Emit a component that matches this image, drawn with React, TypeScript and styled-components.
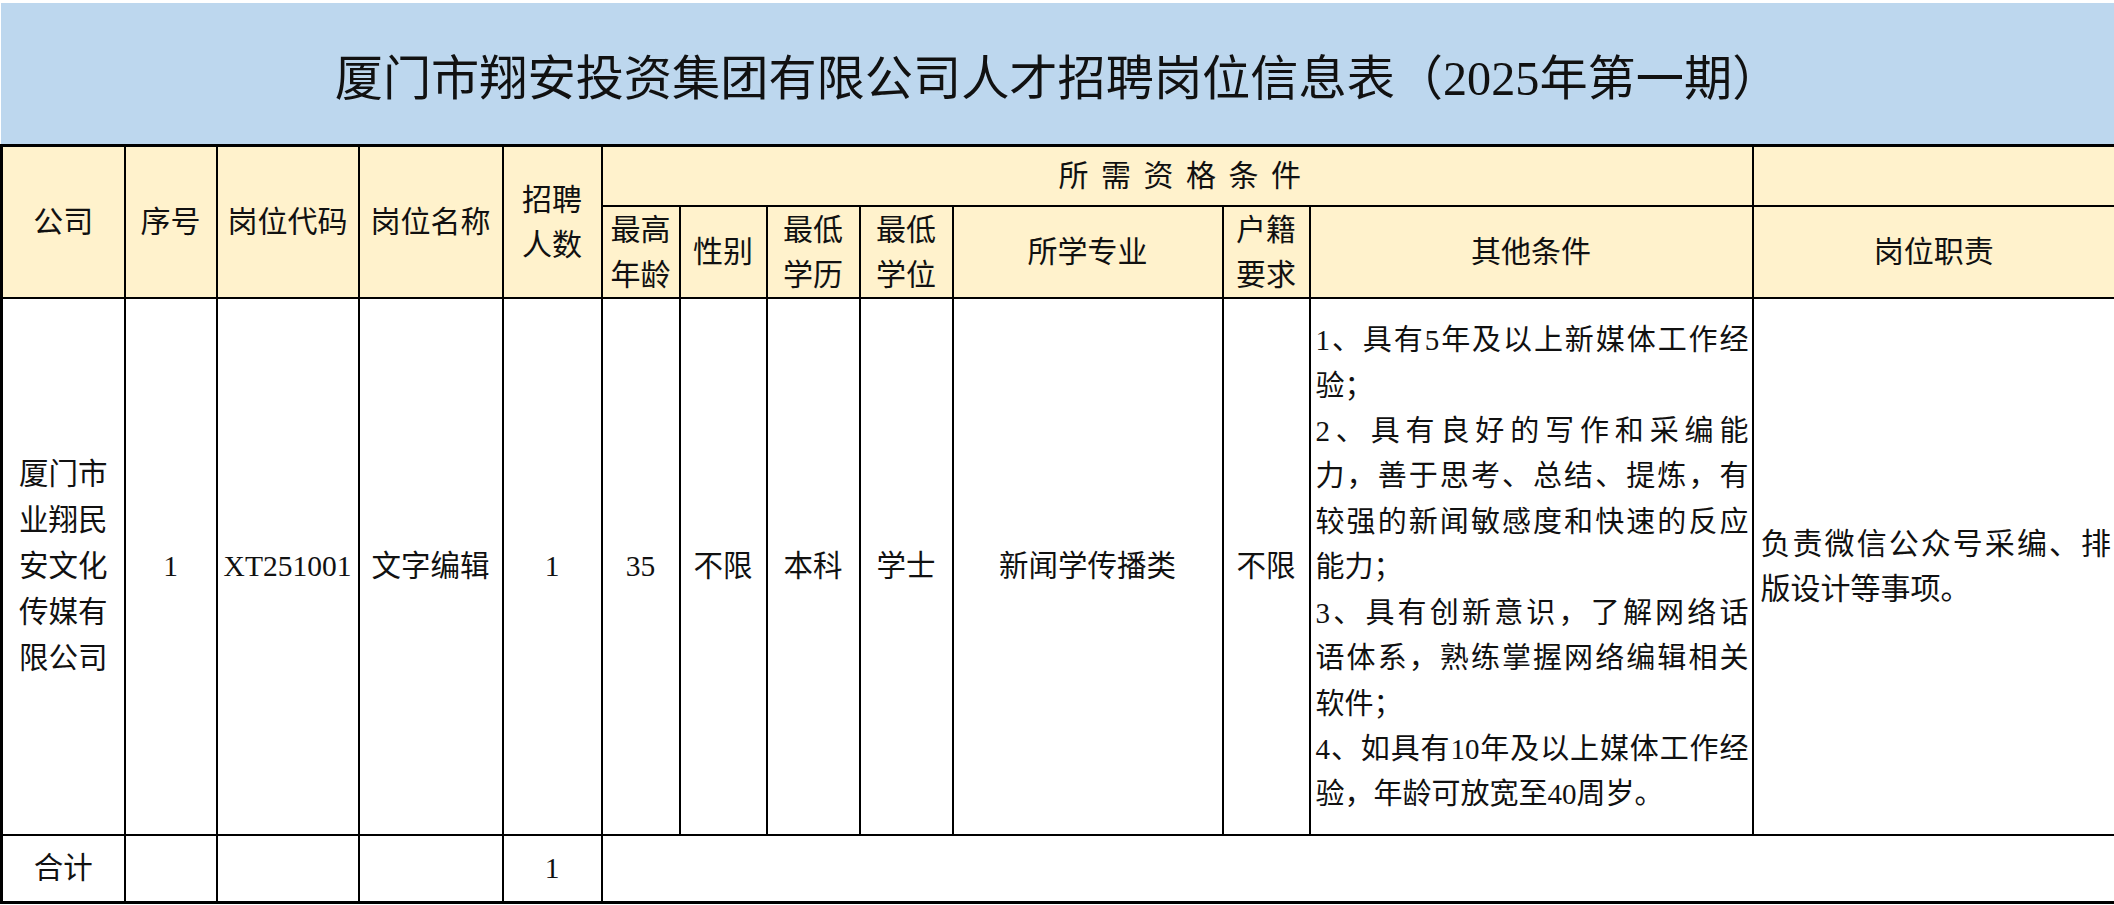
import React from "react";
import styled, { createGlobalStyle } from "styled-components";

const GlobalStyle = createGlobalStyle`
  html, body {
    margin: 0;
    padding: 0;
    background: #ffffff;
  }
  body {
    font-family: "Liberation Serif", "Noto Sans CJK SC", serif;
    color: #111111;
  }
`;

const columns = [123, 92, 142, 144, 99, 78, 87, 93, 93, 270, 87, 443, 363];

const conditions: string[][] = [
  ["1、具有5年及以上新媒体工作经", "验；"],
  ["2、具有良好的写作和采编能", "力，善于思考、总结、提炼，有", "较强的新闻敏感度和快速的反应", "能力；"],
  ["3、具有创新意识，了解网络话", "语体系，熟练掌握网络编辑相关", "软件；"],
  ["4、如具有10年及以上媒体工作经", "验，年龄可放宽至40周岁。"],
];

const App: React.FC = () => {
  return (
    <Page>
      <GlobalStyle />
      <TitleBar>厦门市翔安投资集团有限公司人才招聘岗位信息表（2025年第一期）</TitleBar>
      <Table>
        <colgroup>
          {columns.map((w, i) => (
            <col key={i} style={{ width: w }} />
          ))}
        </colgroup>
        <tbody>
          <Row $h={60}>
            <HeadCell rowSpan={2}>公司</HeadCell>
            <HeadCell rowSpan={2}>序号</HeadCell>
            <HeadCell rowSpan={2}>岗位代码</HeadCell>
            <HeadCell rowSpan={2}>岗位名称</HeadCell>
            <HeadCell rowSpan={2}>招聘人数</HeadCell>
            <GroupHead colSpan={7}>所需资格条件</GroupHead>
            <HeadCell />
          </Row>
          <Row $h={90}>
            <HeadCell>最高年龄</HeadCell>
            <HeadCell>性别</HeadCell>
            <HeadCell>最低学历</HeadCell>
            <HeadCell>最低学位</HeadCell>
            <HeadCell>所学专业</HeadCell>
            <HeadCell>户籍要求</HeadCell>
            <HeadCell>其他条件</HeadCell>
            <HeadCell>岗位职责</HeadCell>
          </Row>
          <Row $h={537}>
            <CompanyCell>厦门市业翔民安文化传媒有限公司</CompanyCell>
            <Cell>1</Cell>
            <Cell $nowrap>XT251001</Cell>
            <Cell>文字编辑</Cell>
            <Cell>1</Cell>
            <Cell>35</Cell>
            <Cell>不限</Cell>
            <Cell>本科</Cell>
            <Cell>学士</Cell>
            <Cell>新闻学传播类</Cell>
            <Cell>不限</Cell>
            <ConditionCell>
              {conditions.map((item, i) => (
                <div key={i}>
                  {item.map((line, j) => (
                    <Line key={j} $full={j < item.length - 1}>
                      {line}
                    </Line>
                  ))}
                </div>
              ))}
            </ConditionCell>
            <DutyCell>负责微信公众号采编、排版设计等事项。</DutyCell>
          </Row>
          <Row $h={68}>
            <Cell>合计</Cell>
            <Cell />
            <Cell />
            <Cell />
            <Cell>1</Cell>
            <Cell colSpan={8} />
          </Row>
        </tbody>
      </Table>
    </Page>
  );
};

const Page = styled.div`
  width: 2114px;
  padding-top: 3px;
`;

const TitleBar = styled.div`
  height: 141px;
  margin-left: 1px;
  background-color: #bdd7ee;
  display: flex;
  align-items: center;
  justify-content: center;
  font-size: 48.2px;
  color: #111111;
`;

const Table = styled.table`
  width: 2114px;
  border-collapse: collapse;
  table-layout: fixed;
  border: 3px solid #000000;
`;

const Row = styled.tr<{ $h: number }>`
  height: ${({ $h }) => $h}px;
`;

const HeadCell = styled.td`
  border: 2px solid #000000;
  background-color: #fff2cc;
  padding: 0 6px;
  text-align: center;
  vertical-align: middle;
  font-size: 30px;
  line-height: 45px;
`;

const GroupHead = styled(HeadCell)`
  letter-spacing: 12.5px;
  padding-left: 24px;
`;

const Cell = styled.td<{ $nowrap?: boolean }>`
  border: 2px solid #000000;
  background-color: #ffffff;
  padding: 0 ${({ $nowrap }) => ($nowrap ? 4 : 6)}px;
  text-align: center;
  vertical-align: middle;
  font-size: 29.5px;
  line-height: 46px;
  white-space: ${({ $nowrap }) => ($nowrap ? "nowrap" : "normal")};
`;

const CompanyCell = styled(Cell)`
  padding: 0 14px;
`;

const ConditionCell = styled(Cell)`
  padding: 4px 3px 0 5px;
  text-align: left;
  font-size: 29px;
  line-height: 45.4px;
`;

const Line = styled.div<{ $full: boolean }>`
  white-space: nowrap;
  text-align: ${({ $full }) => ($full ? "justify" : "left")};
  text-align-last: ${({ $full }) => ($full ? "justify" : "left")};
`;

const DutyCell = styled(Cell)`
  padding: 0 3px 0 7px;
  text-align: justify;
  font-size: 30px;
  line-height: 45px;
`;

export default App;
